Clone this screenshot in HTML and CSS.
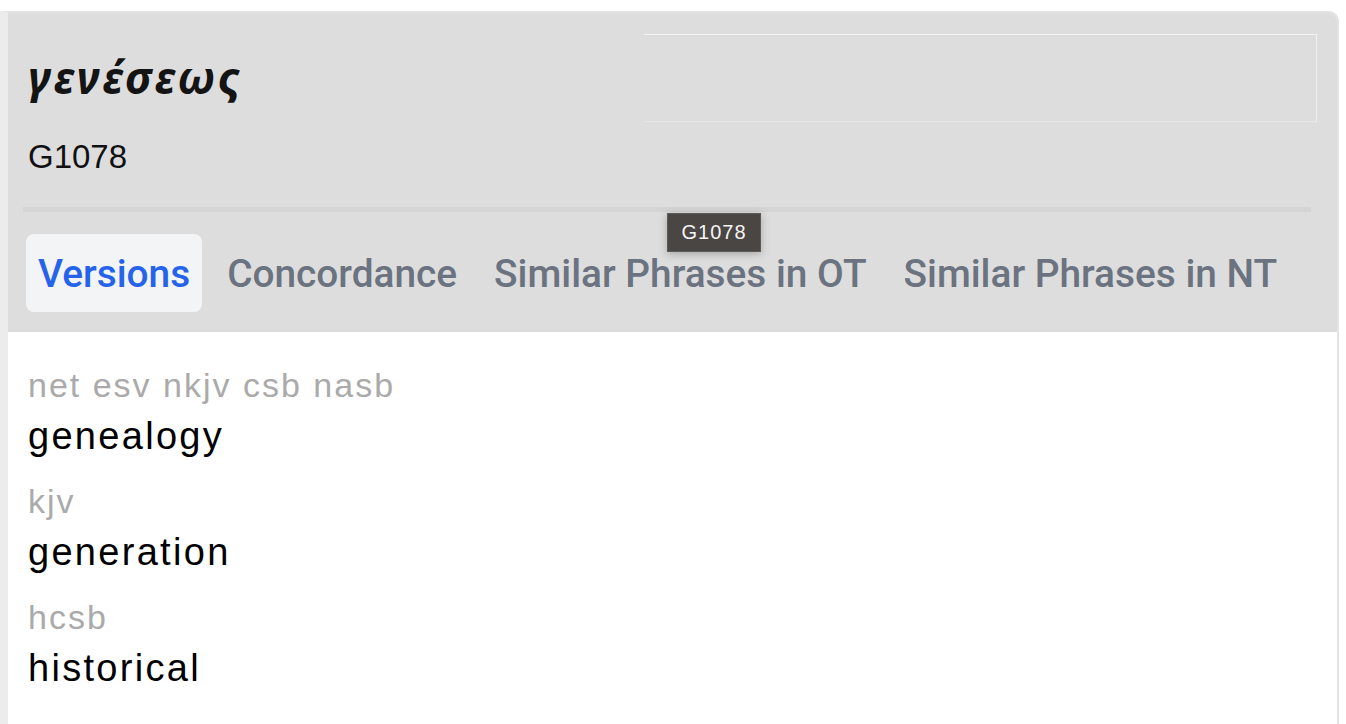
FILE: index.html
```html
<!DOCTYPE html>
<html lang="en">
<head>
<meta charset="utf-8">
<title>γενέσεως</title>
<link rel="stylesheet" href="styles.css">
</head>
<body>
<div class="card">
  <div class="header">
    <div class="top-row">
      <div class="lemma">
        <div class="greek">γενέσεως</div>
        <div class="strong">G1078</div>
      </div>
      <div class="blank-box"></div>
    </div>
    <div class="divider"></div>
    <div class="tabs">
      <div class="tab active">Versions</div>
      <div class="tab">Concordance</div>
      <div class="tab">Similar Phrases in OT</div>
      <div class="tab">Similar Phrases in NT</div>
    </div>
    <div class="tooltip">G1078</div>
  </div>
  <div class="content">
    <div class="entry">
      <div class="versions">net esv nkjv csb nasb</div>
      <div class="gloss">genealogy</div>
    </div>
    <div class="entry">
      <div class="versions">kjv</div>
      <div class="gloss">generation</div>
    </div>
    <div class="entry">
      <div class="versions">hcsb</div>
      <div class="gloss">historical</div>
    </div>
  </div>
</div>
</body>
</html>
```

FILE: styles.css
```css
html, body {
  margin: 0;
  padding: 0;
  background: #ffffff;
}

body {
  padding-top: 11px;
  font-family: "Liberation Sans", Arial, sans-serif;
}

.card {
  margin-right: 7px;
  border-left: 8px solid #ececec;
  border-top: 2px solid #e3e3e3;
  border-right: 2px solid #e3e3e3;
  border-top-right-radius: 10px;
  min-height: 711px;
  overflow: hidden;
}

.header {
  position: relative;
  background: #dddddd;
  padding: 0 20px 20px 20px;
}

.top-row {
  display: flex;
  justify-content: space-between;
  align-items: flex-start;
}

.lemma {
  padding-top: 40px;
}

.greek {
  font-family: "Noto Sans", "DejaVu Sans", sans-serif;
  font-style: italic;
  font-weight: 700;
  font-size: 45px;
  line-height: 48px;
  letter-spacing: 2.6px;
  color: #141414;
}

.strong {
  margin-top: 36px;
  font-size: 33px;
  line-height: 40px;
  color: #111111;
}

.blank-box {
  width: 672px;
  height: 86px;
  margin-top: 21px;
  border-top: 1px solid #f2f2f2;
  border-right: 1px solid #f0f0f0;
  border-bottom: 1px solid #e6e6e6;
}

.divider {
  height: 5px;
  background: #d4d4d4;
  margin: 30px 6px 0 -5px;
}

.tabs {
  display: flex;
  gap: 13px;
  margin-top: 22px;
  margin-left: -2px;
}

.tab {
  height: 78px;
  padding: 0 12px;
  display: flex;
  align-items: center;
  border-radius: 8px;
  font-family: Roboto, "Liberation Sans", sans-serif;
  font-weight: 500;
  font-size: 38.8px;
  color: #6b7280;
}

.tab.active {
  background: #f3f4f6;
  color: #2563eb;
}

.tooltip {
  position: absolute;
  left: 659px;
  top: 200px;
  width: 92px;
  height: 37px;
  box-sizing: content-box;
  display: flex;
  align-items: center;
  justify-content: center;
  background: #4a4644;
  border: 1px solid #5e5a58;
  box-shadow: 0 2px 8px rgba(0, 0, 0, 0.25);
  color: #f4f4f4;
  font-size: 20px;
  letter-spacing: 1px;
}

.content {
  padding: 33px 20px 20px 20px;
}

.entry {
  margin-bottom: 23px;
}

.versions {
  font-size: 34px;
  line-height: 40px;
  letter-spacing: 2px;
  color: #aaaaaa;
  margin-bottom: 9px;
}

.gloss {
  font-size: 38px;
  line-height: 44px;
  letter-spacing: 2.3px;
  color: #000000;
}
```
